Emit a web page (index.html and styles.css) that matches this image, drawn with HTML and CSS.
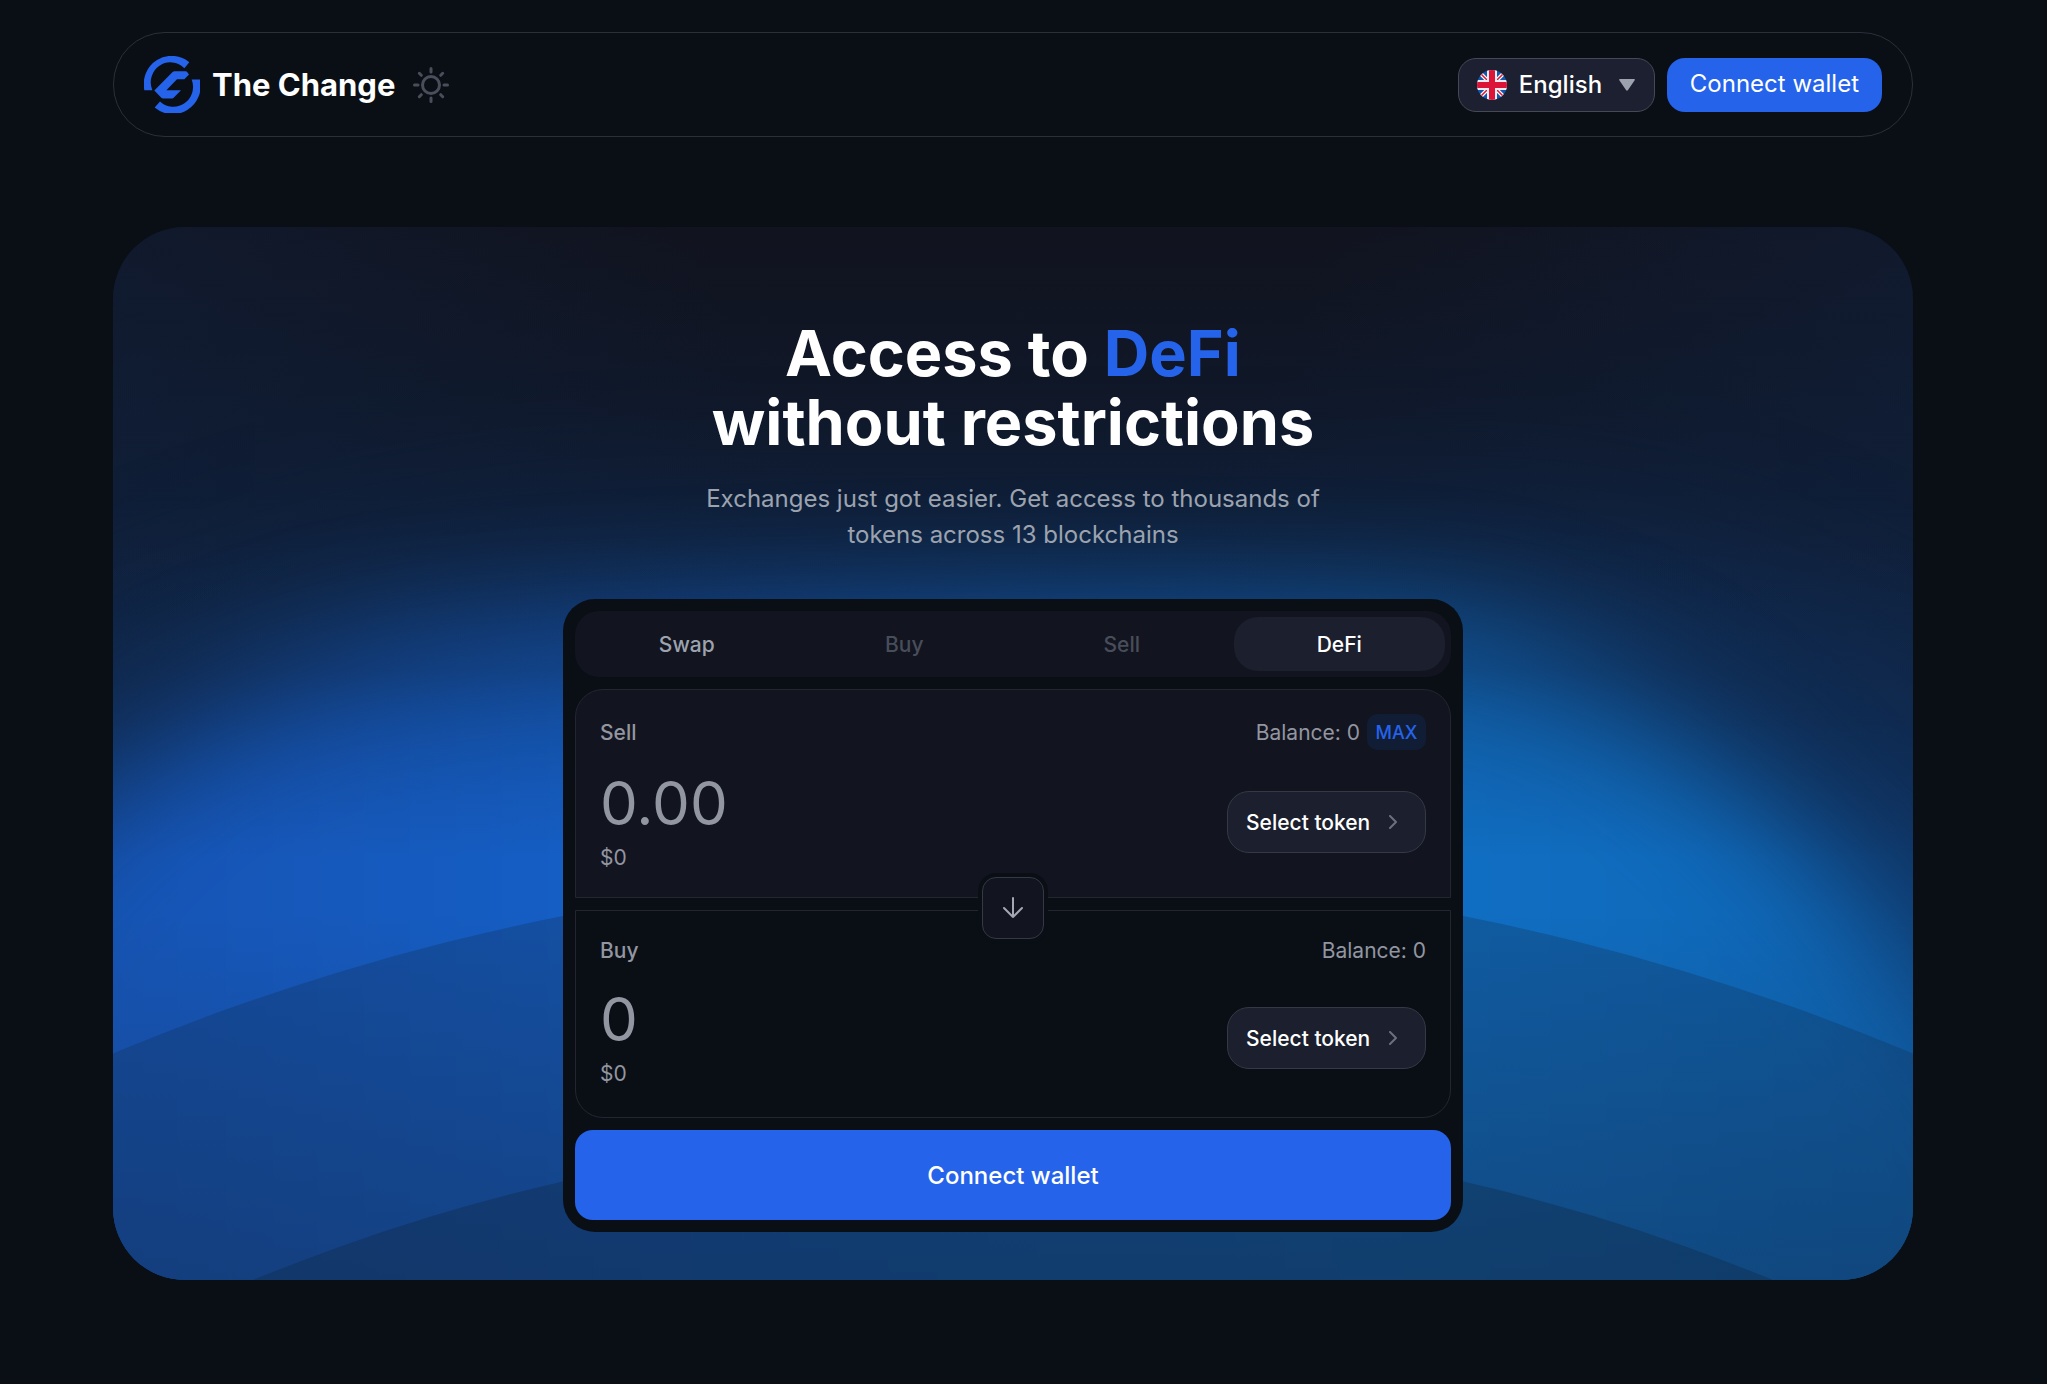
FILE: index.html
```html
<!DOCTYPE html>
<html lang="en">
<head>
<meta charset="utf-8">
<meta name="viewport" content="width=device-width, initial-scale=1">
<title>The Change</title>
<link rel="stylesheet" href="styles.css">
</head>
<body>
<header class="header">
  <a class="brand" href="#">
    <svg class="brand-logo" viewBox="0 0 168 170" aria-hidden="true">
      <path d="M1 102A84 85 0 0 1 136 18L121 36A59 60 0 0 0 25 102Z"/>
      <path d="M168 70A84 85 0 0 1 32 154L48 136A59 60 0 0 0 143 70Z"/>
      <path d="M31 103L85 48Q88 45 92 45H125Q128 45 130 48L135 55L121 69H99L67 102H111L89 125Q87 127 84 127H57Q54 127 52 125Z"/>
    </svg>
    <span class="brand-name">The Change</span>
  </a>
  <button class="theme" type="button" aria-label="Switch theme">
    <svg viewBox="0 0 36 36" aria-hidden="true">
      <circle cx="18" cy="18" r="8.500"/>
      <path d="M18 1.500v3.500M18 31v3.500M1.500 18h3.500M31 18h3.500M6.300 6.300l2 2M27.700 27.700l2 2M6.300 29.700l2-2M27.700 8.300l2-2"/>
    </svg>
  </button>
  <div class="header-actions">
    <label class="language">
      <svg class="flag" viewBox="0 0 30 30" aria-hidden="true">
        <clipPath id="flag-round"><circle cx="15" cy="15" r="15"/></clipPath>
        <g clip-path="url(#flag-round)">
          <path fill="#1257ae" d="M0 0h30v30H0z"/>
          <path stroke="#fff" stroke-width="4" d="M0 0l30 30M30 0L0 30"/>
          <path stroke="#dc1437" stroke-width="1.500" d="M0 0l30 30M30 0L0 30"/>
          <path stroke="#e9edf4" stroke-width="10" d="M15 0v30M0 15h30"/>
          <path stroke="#dc1437" stroke-width="6" d="M15 0v30M0 15h30"/>
        </g>
      </svg>
      <select class="language-select" aria-label="Language">
        <option>English</option>
      </select>
      <svg class="caret" viewBox="0 0 16 12" aria-hidden="true"><path d="M1 0H15Q16.500 0 15.500 1.500L9 11Q8 12.500 7 11L.5 1.500Q-.5 0 1 0Z"/></svg>
    </label>
    <button class="connect" type="button">Connect wallet</button>
  </div>
</header>

<main class="hero">
  <svg class="hero-art" viewBox="0 0 1800 1053" preserveAspectRatio="none" aria-hidden="true">
    <defs>
      <linearGradient id="sky" x1="0" y1="0" x2="0" y2="1">
        <stop offset="0" stop-color="#11131e"/>
        <stop offset=".25" stop-color="#0f1a2e"/>
        <stop offset=".6" stop-color="#0f2a50"/>
        <stop offset="1" stop-color="#0f2f5c"/>
      </linearGradient>
      <linearGradient id="glow" x1="0" y1="0" x2="1800" y2="0" gradientUnits="userSpaceOnUse">
        <stop offset="0" stop-color="#1654b4"/>
        <stop offset=".28" stop-color="#155fc6"/>
        <stop offset=".72" stop-color="#106fc4"/>
        <stop offset="1" stop-color="#0f66b4"/>
      </linearGradient>
      <linearGradient id="fade" x1="0" y1="0" x2="0" y2="1053" gradientUnits="userSpaceOnUse">
        <stop offset=".3" stop-color="#10284c" stop-opacity="0"/>
        <stop offset=".42" stop-color="#10284c" stop-opacity=".3"/>
        <stop offset=".6" stop-color="#10284c" stop-opacity="0"/>
        <stop offset=".65" stop-color="#14233f" stop-opacity="0"/>
        <stop offset="1" stop-color="#14233f" stop-opacity=".3"/>
      </linearGradient>
      <radialGradient id="edge" cx="900" cy="0" r="1000" gradientUnits="userSpaceOnUse">
        <stop offset=".3" stop-color="#102240" stop-opacity="0"/>
        <stop offset="1" stop-color="#102240" stop-opacity=".5"/>
      </radialGradient>
      <filter id="soft" x="-400" y="0" width="2600" height="1700" filterUnits="userSpaceOnUse" color-interpolation-filters="sRGB"><feGaussianBlur stdDeviation="62"/></filter>
      <filter id="softer" x="-600" y="-300" width="3000" height="2200" filterUnits="userSpaceOnUse" color-interpolation-filters="sRGB"><feGaussianBlur stdDeviation="90"/></filter>
    </defs>
    <rect width="1800" height="1053" fill="url(#sky)"/>
    <rect width="1800" height="500" fill="url(#edge)"/>
    <path filter="url(#softer)" fill="#11509a" opacity=".25" d="M-300 1400V640C-100 440 200 330 500 320H1400C1700 330 2000 540 2100 800V1400Z"/>
    <path filter="url(#soft)" fill="url(#glow)" d="M-200 1400V780C-60 580 100 440 360 420C600 400 1200 385 1360 410C1540 450 1700 600 1930 900V1400Z"/>
    <rect width="1800" height="1053" fill="url(#fade)"/>
    <circle cx="900" cy="2965" r="2320" fill="#122a4c" fill-opacity=".28"/>
    <circle cx="900" cy="2903" r="2000" fill="#102a48" fill-opacity=".38"/>
  </svg>

  <h1 class="title">Access to <span class="accent">DeFi</span><br>without restrictions</h1>
  <p class="subtitle">Exchanges just got easier. Get access to thousands of<br>tokens across 13 blockchains</p>

  <section class="card" aria-label="Exchange">
    <nav class="tabs">
      <button class="tab" type="button">Swap</button>
      <button class="tab" type="button" disabled>Buy</button>
      <button class="tab" type="button" disabled>Sell</button>
      <button class="tab tab-active" type="button">DeFi</button>
    </nav>

    <div class="panel panel-sell">
      <div class="panel-head">
        <label class="panel-label" for="sell-amount">Sell</label>
        <span class="balance">Balance: 0 <button class="max" type="button">MAX</button></span>
      </div>
      <div class="panel-body">
        <div class="amount">
          <input class="amount-input" id="sell-amount" type="text" placeholder="0.00">
          <span class="fiat">$0</span>
        </div>
        <button class="token" type="button">Select token
          <svg viewBox="0 0 8 14" aria-hidden="true"><path d="M1 1l6 6-6 6"/></svg>
        </button>
      </div>
    </div>

    <div class="divider">
      <button class="flip" type="button" aria-label="Flip direction">
        <svg viewBox="0 0 22 22" aria-hidden="true"><path d="M11 1v19M2 11l9 9 9-9"/></svg>
      </button>
    </div>

    <div class="panel panel-buy">
      <div class="panel-head">
        <label class="panel-label" for="buy-amount">Buy</label>
        <span class="balance">Balance: 0</span>
      </div>
      <div class="panel-body">
        <div class="amount">
          <input class="amount-input" id="buy-amount" type="text" placeholder="0" readonly>
          <span class="fiat">$0</span>
        </div>
        <button class="token" type="button">Select token
          <svg viewBox="0 0 8 14" aria-hidden="true"><path d="M1 1l6 6-6 6"/></svg>
        </button>
      </div>
    </div>

    <button class="submit" type="button">Connect wallet</button>
  </section>
</main>
</body>
</html>
```
FILE: styles.css
```css
* {
  box-sizing: border-box;
}

body {
  margin: 0;
  padding: 32px 134px 104px 113px;
  background: #0a0f16;
  color: #fff;
  font-family: Inter, "Liberation Sans", sans-serif;
  font-size: 21px;
}

button,
select,
input {
  font: inherit;
  color: inherit;
  margin: 0;
  padding: 0;
  border: 0;
  background: none;
}

button {
  cursor: pointer;
}

.header {
  display: flex;
  align-items: center;
  max-width: 1800px;
  margin: 0 auto;
  height: 105px;
  padding: 0 30px;
  border: 1px solid #2b2f38;
  border-radius: 52px;
}

.brand {
  display: flex;
  align-items: center;
  gap: 12px;
  color: #fff;
  text-decoration: none;
}

.brand-logo {
  width: 56px;
  height: 57px;
  fill: #2563eb;
}

.brand-name {
  font-size: 31px;
  font-weight: 700;
}

.theme {
  display: flex;
  margin-left: 18px;
}

.theme svg {
  width: 36px;
  height: 36px;
  fill: none;
  stroke: #4a4e5b;
  stroke-width: 3;
  stroke-linecap: round;
}

.header-actions {
  display: flex;
  gap: 12px;
  margin-left: auto;
}

.language {
  display: flex;
  align-items: center;
  height: 54px;
  padding: 0 19px 0 18px;
  border: 1px solid #454955;
  border-radius: 18px;
  background: #1c2030;
}

.flag {
  width: 30px;
  height: 30px;
}

.language-select {
  margin: 0 16px 0 12px;
  appearance: none;
  outline: 0;
  font-size: 24px;
  font-weight: 500;
}

.caret {
  width: 16px;
  height: 12px;
  fill: #9ca3af;
}

.connect {
  height: 54px;
  padding: 0 23px 2px;
  border-radius: 18px;
  background: #2563eb;
  font-size: 24px;
}

.hero {
  position: relative;
  display: flex;
  flex-direction: column;
  align-items: center;
  max-width: 1800px;
  margin: 90px auto 0;
  padding: 92px 48px 48px;
  border-radius: 72px;
  overflow: hidden;
}

.hero-art {
  position: absolute;
  inset: 0;
  width: 100%;
  height: 100%;
  z-index: -1;
}

.title {
  margin: 0;
  font-size: 63px;
  font-weight: 700;
  line-height: 69px;
  text-align: center;
}

.accent {
  color: #2563eb;
}

.subtitle {
  margin: 24px 0 46px;
  color: #9ca3af;
  font-size: 24px;
  line-height: 36px;
  text-align: center;
}

.card {
  width: 100%;
  max-width: 900px;
  padding: 12px;
  border-radius: 32px;
  background: #0a0f16;
}

.tabs {
  display: grid;
  grid-template-columns: repeat(4, 1fr);
  gap: 6px;
  padding: 6px;
  margin-bottom: 12px;
  border-radius: 24px;
  background: #12141f;
}

.tab {
  height: 54px;
  border-radius: 24px;
  color: #9ca3af;
  font-weight: 500;
}

.tab:disabled {
  color: #484d5a;
}

.tab-active {
  background: #1b1f2e;
  color: #fff;
}

.panel {
  height: 209px;
  padding: 24px 24px 18px;
  border: 1px solid #23262f;
}

.panel-sell {
  border-radius: 28px 28px 0 0;
  background: #12141f;
}

.panel-buy {
  height: 208px;
  border-radius: 0 0 28px 28px;
}

.panel-head {
  display: flex;
  align-items: center;
  justify-content: space-between;
  height: 36px;
  margin-bottom: 17px;
  color: #9296a1;
}

.panel-buy .panel-head {
  height: 31px;
}

.panel-label {
  font-weight: 500;
}

.balance {
  display: flex;
  align-items: center;
  gap: 7px;
}

.max {
  width: 59px;
  height: 36px;
  border-radius: 10px;
  background: #111d35;
  color: #2563eb;
  font-size: 18px;
  font-weight: 500;
}

.panel-body {
  display: flex;
  align-items: center;
  justify-content: space-between;
  gap: 24px;
}

.amount {
  display: flex;
  flex: 1;
  flex-direction: column;
  min-width: 0;
}

.amount-input {
  width: 100%;
  height: 72px;
  outline: 0;
  font-size: 60px;
}

.amount-input::placeholder {
  color: #9296a1;
  opacity: 1;
}

.fiat {
  color: #9296a1;
  line-height: 38px;
}

.token {
  display: flex;
  align-items: center;
  justify-content: space-between;
  width: 199px;
  height: 62px;
  padding: 0 28px 0 18px;
  border: 1px solid #353944;
  border-radius: 22px;
  background: #1b1f2e;
  font-weight: 500;
}

.token svg {
  width: 8px;
  height: 14px;
  fill: none;
  stroke: #6b707d;
  stroke-width: 2;
  stroke-linecap: round;
  stroke-linejoin: round;
}

.divider {
  position: relative;
  display: flex;
  justify-content: center;
  height: 12px;
}

.flip {
  position: absolute;
  top: -21px;
  display: flex;
  align-items: center;
  justify-content: center;
  width: 62px;
  height: 62px;
  border: 1px solid #353944;
  border-radius: 14px;
  background: #12141f;
  box-shadow: 0 0 0 4px #0a0f16;
}

.flip svg {
  width: 22px;
  height: 22px;
  fill: none;
  stroke: #a3a8b4;
  stroke-width: 2;
  stroke-linecap: round;
  stroke-linejoin: round;
}

.submit {
  display: block;
  width: 100%;
  height: 90px;
  margin-top: 12px;
  border-radius: 18px;
  background: #2563eb;
  font-size: 24px;
  font-weight: 500;
}
```
